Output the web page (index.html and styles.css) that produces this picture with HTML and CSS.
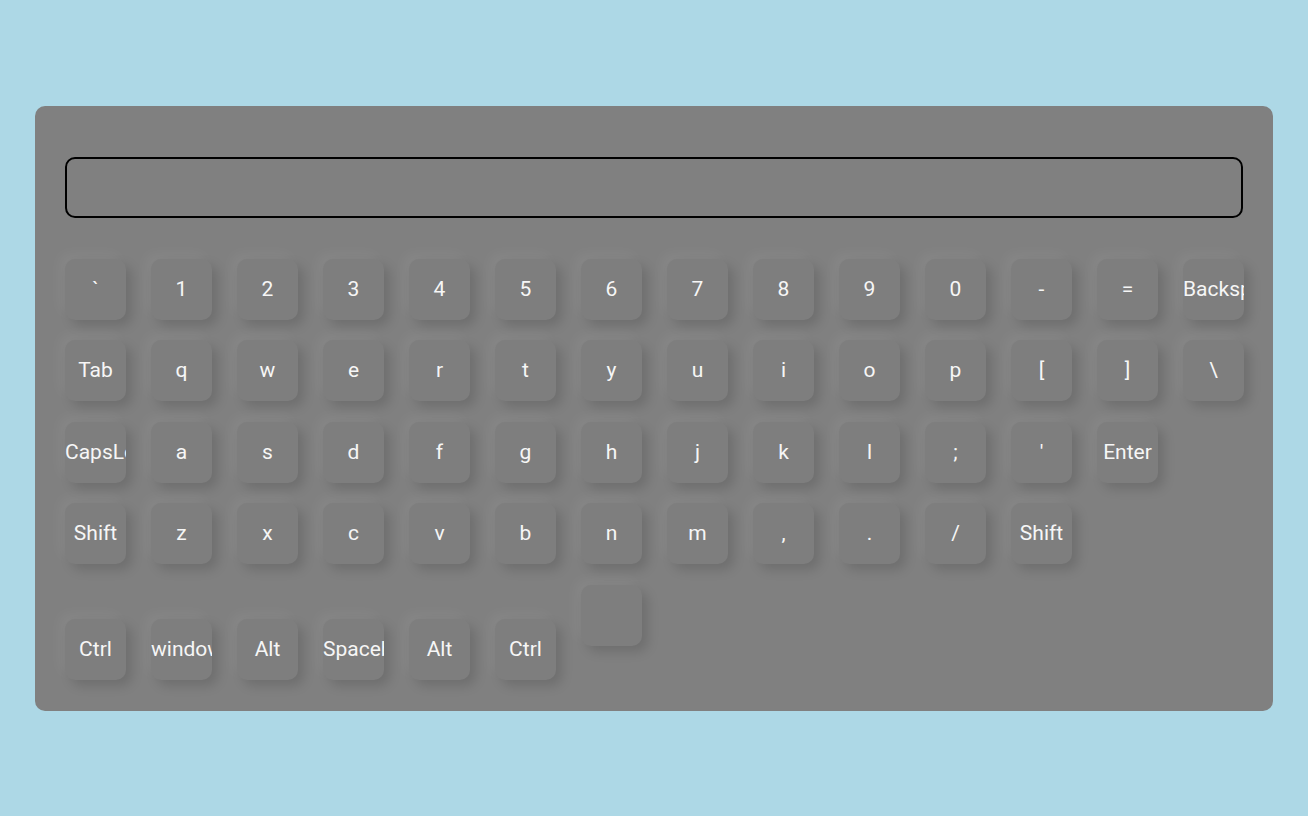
FILE: index.html
```html
<!DOCTYPE html>
<html lang="en">
<head>
<meta charset="utf-8">
<title>Keyboard</title>
<link rel="stylesheet" href="styles.css">
</head>
<body>
<div class="keyboard">
  <input class="display" type="text">
  <div class="keys">
    <div class="row">
      <div class="key"><span class="label">`</span></div><div class="key"><span class="label">1</span></div><div class="key"><span class="label">2</span></div><div class="key"><span class="label">3</span></div><div class="key"><span class="label">4</span></div><div class="key"><span class="label">5</span></div><div class="key"><span class="label">6</span></div><div class="key"><span class="label">7</span></div><div class="key"><span class="label">8</span></div><div class="key"><span class="label">9</span></div><div class="key"><span class="label">0</span></div><div class="key"><span class="label">-</span></div><div class="key"><span class="label">=</span></div><div class="key"><span class="label">Backspace</span></div>
    </div>
    <div class="row">
      <div class="key"><span class="label">Tab</span></div><div class="key"><span class="label">q</span></div><div class="key"><span class="label">w</span></div><div class="key"><span class="label">e</span></div><div class="key"><span class="label">r</span></div><div class="key"><span class="label">t</span></div><div class="key"><span class="label">y</span></div><div class="key"><span class="label">u</span></div><div class="key"><span class="label">i</span></div><div class="key"><span class="label">o</span></div><div class="key"><span class="label">p</span></div><div class="key"><span class="label">[</span></div><div class="key"><span class="label">]</span></div><div class="key"><span class="label">\</span></div>
    </div>
    <div class="row">
      <div class="key"><span class="label">CapsLock</span></div><div class="key"><span class="label">a</span></div><div class="key"><span class="label">s</span></div><div class="key"><span class="label">d</span></div><div class="key"><span class="label">f</span></div><div class="key"><span class="label">g</span></div><div class="key"><span class="label">h</span></div><div class="key"><span class="label">j</span></div><div class="key"><span class="label">k</span></div><div class="key"><span class="label">l</span></div><div class="key"><span class="label">;</span></div><div class="key"><span class="label">'</span></div><div class="key"><span class="label">Enter</span></div>
    </div>
    <div class="row">
      <div class="key"><span class="label">Shift</span></div><div class="key"><span class="label">z</span></div><div class="key"><span class="label">x</span></div><div class="key"><span class="label">c</span></div><div class="key"><span class="label">v</span></div><div class="key"><span class="label">b</span></div><div class="key"><span class="label">n</span></div><div class="key"><span class="label">m</span></div><div class="key"><span class="label">,</span></div><div class="key"><span class="label">.</span></div><div class="key"><span class="label">/</span></div><div class="key"><span class="label">Shift</span></div>
    </div>
    <div class="row">
      <div class="key"><span class="label">Ctrl</span></div><div class="key"><span class="label">windows</span></div><div class="key"><span class="label">Alt</span></div><div class="key"><span class="label">Spacebar</span></div><div class="key"><span class="label">Alt</span></div><div class="key"><span class="label">Ctrl</span></div><div class="key"></div>
    </div>
  </div>
</div>
</body>
</html>
```
FILE: styles.css
```css
html, body {
  margin: 0;
  padding: 0;
}

body {
  min-height: 100vh;
  background: #add8e6;
  display: flex;
  align-items: center;
  justify-content: center;
  font-family: Roboto, "Liberation Sans", sans-serif;
}

.keyboard {
  box-sizing: border-box;
  width: 1238px;
  padding: 51px 30px 20px;
  background: #808080;
  border-radius: 10px;
}

.display {
  display: block;
  box-sizing: border-box;
  width: 100%;
  height: 61px;
  margin: 0 0 31px;
  padding: 0 12px;
  border: 2px solid #000;
  border-radius: 10px;
  background: transparent;
  outline: none;
  font: 20px Roboto, sans-serif;
  color: #fff;
}

.row {
  font-size: 0;
  line-height: 0;
  white-space: nowrap;
}

.key {
  display: inline-block;
  vertical-align: baseline;
  width: 61px;
  height: 61px;
  margin: 10px 25px 10.5px 0;
  border-radius: 10px;
  background: #7e7e7e;
  box-shadow: 6px 6px 12px rgba(0, 0, 0, 0.14), -6px -6px 12px rgba(255, 255, 255, 0.05);
  color: #f6f6f6;
  font-size: 21px;
}

.key:last-child {
  margin-right: 0;
}

.label {
  display: block;
  width: 61px;
  line-height: 61px;
  text-align: center;
  white-space: nowrap;
  clip-path: inset(0);
}
```
